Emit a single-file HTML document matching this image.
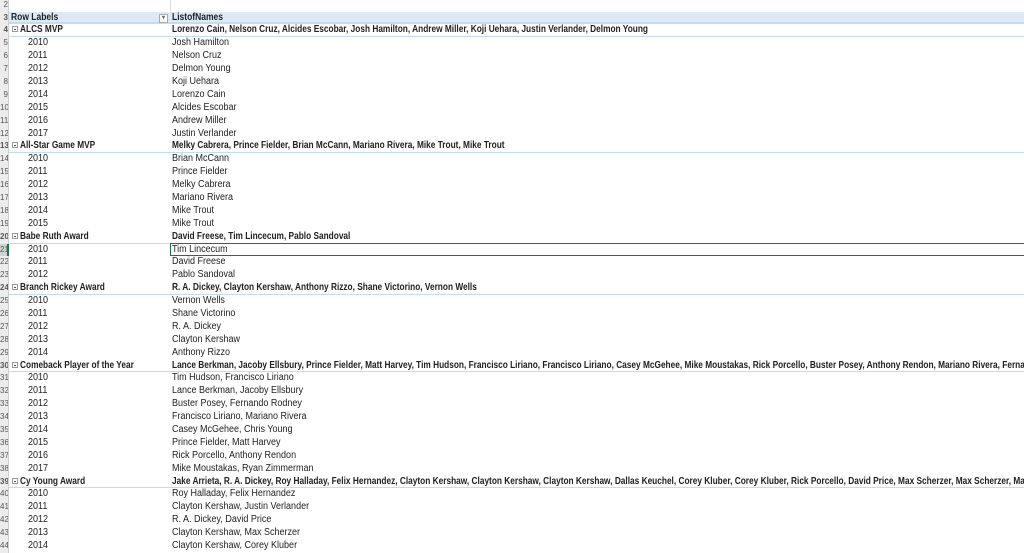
<!DOCTYPE html>
<html><head><meta charset="utf-8"><style>
body{margin:0;width:1024px;height:548px;overflow:hidden;background:#fff;font-family:"Liberation Sans",sans-serif;font-size:10px;color:#222}
#g{position:absolute;top:-1.4px;left:0;width:1024px}
.r{position:relative;height:12.9px;box-sizing:border-box;white-space:nowrap}
.n{position:absolute;left:0;top:0;width:9px;height:12.9px;background:#ececec;border-right:1px solid #cfcfcf;box-sizing:border-box;font-size:8px;color:#555;line-height:12.9px;overflow:hidden;text-align:right}
.a,.b{position:absolute;top:0;line-height:12.9px;}
.a{left:12px}
.b{left:172px}
.t{display:inline-block;transform:scaleX(.9);transform-origin:left}
.gr{font-weight:bold;border-bottom:1px solid #c5dcf0}
.gr .t{transform:scaleX(.83)}
.hd{background:#dde9f6;font-weight:bold;border-bottom:2px solid #c6dbef}
.hd .t{transform:scaleX(.85)}
.y{left:28px}
.ic{display:inline-block;width:6px;height:6px;border:1px solid #999;box-sizing:border-box;margin-right:2px;position:relative;top:0px;background:#fff}
.ic:after{content:"";position:absolute;left:1px;top:2px;width:2px;height:1px;background:#555}
.sel{position:absolute;left:170px;top:242.5px;width:860px;height:13px;border:1.5px solid #217346;box-sizing:border-box}
</style></head><body>
<div id="g">
<div class="r"><div class="n">2</div><div style="position:absolute;left:170px;top:0;width:1px;height:13px;background:#e0e0e0"></div></div>
<div class="r hd"><div class="n">3</div><div class="a" style="left:11px"><span class="t">Row Labels</span></div><div style="position:absolute;left:159px;top:2px;width:9px;height:9px;border:1px solid #aaa;box-sizing:border-box;background:#fff;font-size:6px;line-height:7px;text-align:center;color:#666">▾</div><div class="b"><span class="t">ListofNames</span></div></div>
<div class="r gr"><div class="n">4</div><div class="a"><span class="ic"></span><span class="t">ALCS MVP</span></div><div class="b"><span class="t">Lorenzo Cain, Nelson Cruz, Alcides Escobar, Josh Hamilton, Andrew Miller, Koji Uehara, Justin Verlander, Delmon Young</span></div></div>
<div class="r"><div class="n">5</div><div class="a y"><span class="t">2010</span></div><div class="b"><span class="t">Josh Hamilton</span></div></div>
<div class="r"><div class="n">6</div><div class="a y"><span class="t">2011</span></div><div class="b"><span class="t">Nelson Cruz</span></div></div>
<div class="r"><div class="n">7</div><div class="a y"><span class="t">2012</span></div><div class="b"><span class="t">Delmon Young</span></div></div>
<div class="r"><div class="n">8</div><div class="a y"><span class="t">2013</span></div><div class="b"><span class="t">Koji Uehara</span></div></div>
<div class="r"><div class="n">9</div><div class="a y"><span class="t">2014</span></div><div class="b"><span class="t">Lorenzo Cain</span></div></div>
<div class="r"><div class="n">10</div><div class="a y"><span class="t">2015</span></div><div class="b"><span class="t">Alcides Escobar</span></div></div>
<div class="r"><div class="n">11</div><div class="a y"><span class="t">2016</span></div><div class="b"><span class="t">Andrew Miller</span></div></div>
<div class="r"><div class="n">12</div><div class="a y"><span class="t">2017</span></div><div class="b"><span class="t">Justin Verlander</span></div></div>
<div class="r gr"><div class="n">13</div><div class="a"><span class="ic"></span><span class="t">All-Star Game MVP</span></div><div class="b"><span class="t">Melky Cabrera, Prince Fielder, Brian McCann, Mariano Rivera, Mike Trout, Mike Trout</span></div></div>
<div class="r"><div class="n">14</div><div class="a y"><span class="t">2010</span></div><div class="b"><span class="t">Brian McCann</span></div></div>
<div class="r"><div class="n">15</div><div class="a y"><span class="t">2011</span></div><div class="b"><span class="t">Prince Fielder</span></div></div>
<div class="r"><div class="n">16</div><div class="a y"><span class="t">2012</span></div><div class="b"><span class="t">Melky Cabrera</span></div></div>
<div class="r"><div class="n">17</div><div class="a y"><span class="t">2013</span></div><div class="b"><span class="t">Mariano Rivera</span></div></div>
<div class="r"><div class="n">18</div><div class="a y"><span class="t">2014</span></div><div class="b"><span class="t">Mike Trout</span></div></div>
<div class="r"><div class="n">19</div><div class="a y"><span class="t">2015</span></div><div class="b"><span class="t">Mike Trout</span></div></div>
<div class="r gr"><div class="n">20</div><div class="a"><span class="ic"></span><span class="t">Babe Ruth Award</span></div><div class="b"><span class="t">David Freese, Tim Lincecum, Pablo Sandoval</span></div></div>
<div class="r"><div class="n" style="background:#d2d2d2;border-right:2px solid #217346;color:#217346">21</div><div class="a y"><span class="t">2010</span></div><div class="b"><span class="t">Tim Lincecum</span></div></div>
<div class="r"><div class="n">22</div><div class="a y"><span class="t">2011</span></div><div class="b"><span class="t">David Freese</span></div></div>
<div class="r"><div class="n">23</div><div class="a y"><span class="t">2012</span></div><div class="b"><span class="t">Pablo Sandoval</span></div></div>
<div class="r gr"><div class="n">24</div><div class="a"><span class="ic"></span><span class="t">Branch Rickey Award</span></div><div class="b"><span class="t">R. A. Dickey, Clayton Kershaw, Anthony Rizzo, Shane Victorino, Vernon Wells</span></div></div>
<div class="r"><div class="n">25</div><div class="a y"><span class="t">2010</span></div><div class="b"><span class="t">Vernon Wells</span></div></div>
<div class="r"><div class="n">26</div><div class="a y"><span class="t">2011</span></div><div class="b"><span class="t">Shane Victorino</span></div></div>
<div class="r"><div class="n">27</div><div class="a y"><span class="t">2012</span></div><div class="b"><span class="t">R. A. Dickey</span></div></div>
<div class="r"><div class="n">28</div><div class="a y"><span class="t">2013</span></div><div class="b"><span class="t">Clayton Kershaw</span></div></div>
<div class="r"><div class="n">29</div><div class="a y"><span class="t">2014</span></div><div class="b"><span class="t">Anthony Rizzo</span></div></div>
<div class="r gr"><div class="n">30</div><div class="a"><span class="ic"></span><span class="t">Comeback Player of the Year</span></div><div class="b"><span class="t">Lance Berkman, Jacoby Ellsbury, Prince Fielder, Matt Harvey, Tim Hudson, Francisco Liriano, Francisco Liriano, Casey McGehee, Mike Moustakas, Rick Porcello, Buster Posey, Anthony Rendon, Mariano Rivera, Fernando Rodney</span></div></div>
<div class="r"><div class="n">31</div><div class="a y"><span class="t">2010</span></div><div class="b"><span class="t">Tim Hudson, Francisco Liriano</span></div></div>
<div class="r"><div class="n">32</div><div class="a y"><span class="t">2011</span></div><div class="b"><span class="t">Lance Berkman, Jacoby Ellsbury</span></div></div>
<div class="r"><div class="n">33</div><div class="a y"><span class="t">2012</span></div><div class="b"><span class="t">Buster Posey, Fernando Rodney</span></div></div>
<div class="r"><div class="n">34</div><div class="a y"><span class="t">2013</span></div><div class="b"><span class="t">Francisco Liriano, Mariano Rivera</span></div></div>
<div class="r"><div class="n">35</div><div class="a y"><span class="t">2014</span></div><div class="b"><span class="t">Casey McGehee, Chris Young</span></div></div>
<div class="r"><div class="n">36</div><div class="a y"><span class="t">2015</span></div><div class="b"><span class="t">Prince Fielder, Matt Harvey</span></div></div>
<div class="r"><div class="n">37</div><div class="a y"><span class="t">2016</span></div><div class="b"><span class="t">Rick Porcello, Anthony Rendon</span></div></div>
<div class="r"><div class="n">38</div><div class="a y"><span class="t">2017</span></div><div class="b"><span class="t">Mike Moustakas, Ryan Zimmerman</span></div></div>
<div class="r gr"><div class="n">39</div><div class="a"><span class="ic"></span><span class="t">Cy Young Award</span></div><div class="b"><span class="t">Jake Arrieta, R. A. Dickey, Roy Halladay, Felix Hernandez, Clayton Kershaw, Clayton Kershaw, Clayton Kershaw, Dallas Keuchel, Corey Kluber, Corey Kluber, Rick Porcello, David Price, Max Scherzer, Max Scherzer, Max Scherzer</span></div></div>
<div class="r"><div class="n">40</div><div class="a y"><span class="t">2010</span></div><div class="b"><span class="t">Roy Halladay, Felix Hernandez</span></div></div>
<div class="r"><div class="n">41</div><div class="a y"><span class="t">2011</span></div><div class="b"><span class="t">Clayton Kershaw, Justin Verlander</span></div></div>
<div class="r"><div class="n">42</div><div class="a y"><span class="t">2012</span></div><div class="b"><span class="t">R. A. Dickey, David Price</span></div></div>
<div class="r"><div class="n">43</div><div class="a y"><span class="t">2013</span></div><div class="b"><span class="t">Clayton Kershaw, Max Scherzer</span></div></div>
<div class="r"><div class="n">44</div><div class="a y"><span class="t">2014</span></div><div class="b"><span class="t">Clayton Kershaw, Corey Kluber</span></div></div>
</div>
<div class="sel"></div>
</body></html>
